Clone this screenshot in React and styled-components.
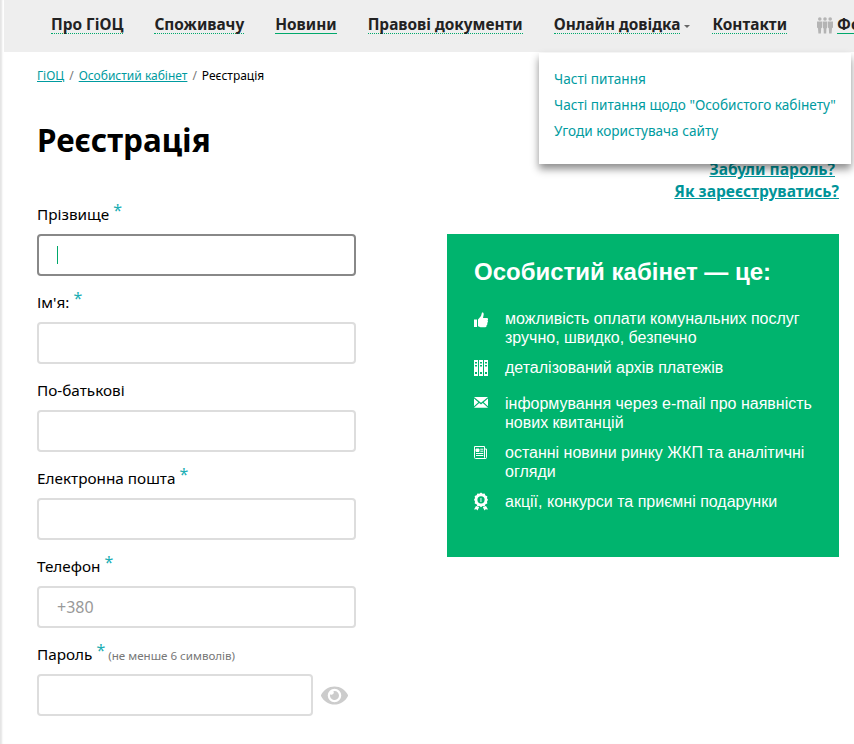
import React from 'react';
import styled, { createGlobalStyle } from 'styled-components';
import { FaEye } from 'react-icons/fa';

const GlobalStyle = createGlobalStyle`
  html, body {
    margin: 0;
    padding: 0;
    height: 744px;
    overflow: hidden;
    background: #fff;
  }
  body {
    font-family: 'Noto Sans', 'Open Sans', sans-serif;
    color: #000;
  }
`;

const navItems = [
  { label: 'Про ГіОЦ' },
  { label: 'Споживачу' },
  { label: 'Новини', solid: true },
  { label: 'Правові документи' },
  { label: 'Онлайн довідка', menu: true },
  { label: 'Контакти' },
];

const fields = [
  { label: 'Прізвище', required: true, focused: true },
  { label: "Ім'я:", required: true },
  { label: 'По-батькові' },
  { label: 'Електронна пошта', required: true },
  { label: 'Телефон', required: true, placeholder: '+380' },
];

const PeopleIcon = () => (
  <svg width="16" height="17" viewBox="0 0 16 17" fill="#b4b4b4">
    <circle cx="2.8" cy="2" r="1.8" />
    <circle cx="8" cy="2" r="1.8" />
    <circle cx="13.2" cy="2" r="1.8" />
    <path d="M0 4.4h5l.2 6.2-1 .6-.3 5.4H1.4l-.4-5.4-1-.6z" />
    <path d="M5.6 4.4h4.8l-.4 6.6-.6.4-.2 5.2H6.8l-.2-5.2-.6-.4z" />
    <path d="M11 4.4h5v6.2l-1 .6-.4 5.4h-2.5l-.3-5.4-1-.6z" />
  </svg>
);

const ThumbIcon = () => (
  <svg width="14" height="16" viewBox="0 0 14 16" fill="#fff">
    <path d="M0 7.5h3V15H0z" />
    <path d="M4 7.5 7 4l1-3.5C9.5 0 10 1.5 9.5 3.5L9 6h4c1.3 0 1.3 2 .5 2.5.8.7.5 2.2-.3 2.5.5.8.1 2-.7 2.3.3 1-.2 1.9-1.2 1.9H6.5L4 14.2z" />
  </svg>
);

const ArchiveIcon = () => (
  <svg width="14" height="16" viewBox="0 0 14 16" fill="#fff">
    <path fillRule="evenodd" d="M0 0h4v16H0zM1 2v1.5h2V2zM1 5v1.5h2V5zM1 12v2h2v-2z" />
    <path fillRule="evenodd" d="M5 0h4v16H5zM6 2v1.5h2V2zM6 5v1.5h2V5zM6 12v2h2v-2z" />
    <path fillRule="evenodd" d="M10 0h4v16h-4zM11 2v1.5h2V2zM11 5v1.5h2V5zM11 12v2h2v-2z" />
  </svg>
);

const MailIcon = () => (
  <svg width="14" height="11" viewBox="0 0 14 11" fill="#fff">
    <path d="M0 0h14L7 5.8z" />
    <path d="M0 1.6 4.3 5.2 0 9.2zM14 1.6 9.7 5.2 14 9.2z" />
    <path d="M5.2 6 7 7.5 8.8 6 14 10.8H0z" />
  </svg>
);

const NewsIcon = () => (
  <svg width="13" height="13" viewBox="0 0 13 13" fill="none" stroke="#fff">
    <path d="M.5.5h10v11a1 1 0 0 0 1 1h-10a1 1 0 0 1-1-1zM10.5 3h2v8.5a1 1 0 0 1-1 1" />
    <path d="M2 3h3v2.5H2z" fill="#fff" />
    <path d="M6.3 3.2h3M6.3 5.2h3M2 7.5h7.3M2 9.5h7.3" />
  </svg>
);

const AwardIcon = () => (
  <svg width="14" height="19" viewBox="0 0 14 18">
    <path d="M7 0l1.6 1.3 2-.3.8 1.9 1.9.8-.3 2L14 7.3l-1 1.7.3 2-1.9.8-.8 1.9-2-.3L7 14.7l-1.6-1.3-2 .3-.8-1.9-1.9-.8.3-2L0 7.3l1-1.7-.3-2 1.9-.8.8-1.9 2 .3z" fill="#fff" />
    <circle cx="7" cy="7.3" r="3.6" fill="#00b46e" />
    <path d="M7.4 5.2v4.2H6.5V6.3l-.8.3z" fill="#fff" />
    <path d="M2 13.5 0 17l2.4-.3L3.5 18l1.7-3.5zM12 13.5 14 17l-2.4-.3L10.5 18l-1.7-3.5z" fill="#fff" />
  </svg>
);

const benefits = [
  { icon: <ThumbIcon />, text: 'можливість оплати комунальних послуг зручно, швидко, безпечно', gap: 11, top: 3 },
  { icon: <ArchiveIcon />, text: 'деталізований архів платежів', gap: 17, top: 2 },
  { icon: <MailIcon />, text: 'інформування через e-mail про наявність нових квитанцій', gap: 11, top: 3 },
  { icon: <NewsIcon />, text: 'останні новини ринку ЖКП та аналітичні огляди', gap: 11, top: 3 },
  { icon: <AwardIcon />, text: 'акції, конкурси та приємні подарунки', gap: 0, top: 0 },
];

const App = function () {
  return (
    <Page>
      <GlobalStyle />

      <TopBar>
        {navItems.map((item) => (
          <NavEntry key={item.label} $menu={item.menu}>
            <NavLink href="#" $solid={item.solid}>{item.label}</NavLink>
            {item.menu && <Caret />}
          </NavEntry>
        ))}
        <NavEntry $forum>
          <PeopleIcon />
          <NavLink href="#" $solid>Форум</NavLink>
        </NavEntry>

        <Dropdown>
          <DropdownLink href="#">Часті питання</DropdownLink>
          <DropdownLink href="#">Часті питання щодо "Особистого кабінету"</DropdownLink>
          <DropdownLink href="#">Угоди користувача сайту</DropdownLink>
        </Dropdown>
      </TopBar>

      <Content>
        <FormColumn>
          <Crumbs>
            <CrumbLink href="#">ГіОЦ</CrumbLink>
            <CrumbSep>/</CrumbSep>
            <CrumbLink href="#">Особистий кабінет</CrumbLink>
            <CrumbSep>/</CrumbSep>
            <span>Реєстрація</span>
          </Crumbs>

          <Title>Реєстрація</Title>

          {fields.map((field) => (
            <Field key={field.label}>
              <Label>
                {field.label}
                {field.required && <Star>*</Star>}
              </Label>
              <Input $focused={field.focused}>
                {field.focused && <Cursor />}
                {field.placeholder && <Placeholder>{field.placeholder}</Placeholder>}
              </Input>
            </Field>
          ))}

          <Field>
            <Label>
              Пароль<Star>*</Star>
              <Hint>(не менше 6 символів)</Hint>
            </Label>
            <PasswordRow>
              <Input $short />
              <EyeButton><FaEye size={27} /></EyeButton>
            </PasswordRow>
          </Field>
        </FormColumn>

        <SideColumn>
          <HelpLinks>
            <HelpLink href="#" $inset>Забули пароль?</HelpLink>
            <HelpLink href="#">Як зареєструватись?</HelpLink>
          </HelpLinks>

          <Panel>
            <PanelTitle>Особистий кабінет — це:</PanelTitle>
            <BenefitList>
              {benefits.map((benefit) => (
                <Benefit key={benefit.text} $gap={benefit.gap}>
                  <BenefitIcon $top={benefit.top}>{benefit.icon}</BenefitIcon>
                  <span>{benefit.text}</span>
                </Benefit>
              ))}
            </BenefitList>
          </Panel>
        </SideColumn>
      </Content>
    </Page>
  );
};

const Page = styled.div`
  width: 854px;
  height: 744px;
  overflow: hidden;
  position: relative;
  box-shadow: inset 3px 0 2px -1px #e4e4e4;
`;

const TopBar = styled.nav`
  position: relative;
  display: flex;
  align-items: flex-start;
  gap: 31px;
  height: 52px;
  box-sizing: border-box;
  padding: 16px 0 0 47px;
  margin-left: 4px;
  background: #eee;
  white-space: nowrap;
`;

const NavEntry = styled.div`
  display: flex;
  align-items: center;
  gap: 4px;
  flex-shrink: 0;
  margin-right: ${(p) => (p.$menu ? '-9px' : '0')};
  margin-left: ${(p) => (p.$forum ? '-1px' : '0')};
`;

const NavLink = styled.a`
  font-size: 15.4px;
  font-weight: 700;
  line-height: 17px;
  color: #222;
  text-decoration: none;
  border-bottom: ${(p) => (p.$solid ? '1px solid #00a86b' : '1px dotted #00a86b')};
`;

const Caret = styled.span`
  width: 0;
  height: 0;
  margin-top: 3px;
  border-left: 3.5px solid transparent;
  border-right: 3.5px solid transparent;
  border-top: 3.5px solid #666;
`;

const Dropdown = styled.div`
  position: absolute;
  left: 535px;
  top: 53px;
  width: 312px;
  height: 111px;
  box-sizing: border-box;
  padding: 13px 15px;
  display: flex;
  flex-direction: column;
  background: #fff;
  box-shadow: 0 5px 8px rgba(0, 0, 0, 0.45);
  z-index: 5;
`;

const DropdownLink = styled.a`
  font-size: 13.6px;
  line-height: 26px;
  color: #009ba0;
  text-decoration: none;
  white-space: nowrap;
`;

const Content = styled.div`
  display: flex;
  padding-left: 37px;
`;

const FormColumn = styled.div`
  width: 320px;
`;

const Crumbs = styled.div`
  display: flex;
  gap: 5px;
  margin-top: 15px;
  font-size: 12px;
  line-height: 17px;
`;

const CrumbLink = styled.a`
  color: #009ba0;
`;

const CrumbSep = styled.span`
  color: #777;
`;

const Title = styled.h1`
  margin: 34px 0 0;
  font-size: 31.4px;
  font-weight: 700;
  line-height: 44px;
  height: 82px;
`;

const Field = styled.div`
  height: 88px;
`;

const Label = styled.div`
  height: 34px;
  padding-top: 2px;
  box-sizing: border-box;
  font-size: 15.3px;
  line-height: 24px;
  white-space: nowrap;
`;

const Star = styled.span`
  margin-left: 4px;
  color: #19aeb4;
  font-size: 16px;
  line-height: 14px;
  vertical-align: 4px;
`;

const Hint = styled.span`
  margin-left: 3px;
  color: #777;
  font-size: 11.6px;
`;

const Input = styled.div`
  width: ${(p) => (p.$short ? '276px' : '319px')};
  height: 42px;
  box-sizing: border-box;
  display: flex;
  align-items: center;
  padding-left: 18px;
  background: #fff;
  border: 2px solid ${(p) => (p.$focused ? '#888' : '#ddd')};
  border-radius: 4px;
`;

const Cursor = styled.span`
  width: 1px;
  height: 18px;
  background: #00a86b;
`;

const Placeholder = styled.span`
  font-size: 16px;
  color: #999;
`;

const PasswordRow = styled.div`
  display: flex;
  align-items: center;
  gap: 8px;
`;

const EyeButton = styled.span`
  display: flex;
  color: #ccc;
`;

const SideColumn = styled.div`
  position: relative;
  margin-left: 90px;
  width: 392px;
`;

const HelpLinks = styled.div`
  display: flex;
  flex-direction: column;
  align-items: flex-end;
  margin-top: 106px;
`;

const HelpLink = styled.a`
  font-size: 15.6px;
  font-weight: 700;
  line-height: 22px;
  color: #009499;
  margin-right: ${(p) => (p.$inset ? '4px' : '0')};
`;

const Panel = styled.section`
  margin-top: 32px;
  height: 323px;
  box-sizing: border-box;
  padding: 24px 27px;
  background: #00b46e;
  color: #fff;
  font-family: 'Liberation Sans', Arial, sans-serif;
`;

const PanelTitle = styled.h2`
  margin: 0;
  font-size: 24px;
  font-weight: 700;
  line-height: 28px;
`;

const BenefitList = styled.ul`
  margin: 23px 0 0;
  padding: 0;
  list-style: none;
`;

const Benefit = styled.li`
  display: flex;
  font-size: 16px;
  line-height: 19px;
  margin-bottom: ${(p) => p.$gap}px;
`;

const BenefitIcon = styled.span`
  flex: 0 0 31px;
  display: flex;
  align-items: flex-start;
  padding-top: ${(p) => p.$top}px;
`;

export default App;
